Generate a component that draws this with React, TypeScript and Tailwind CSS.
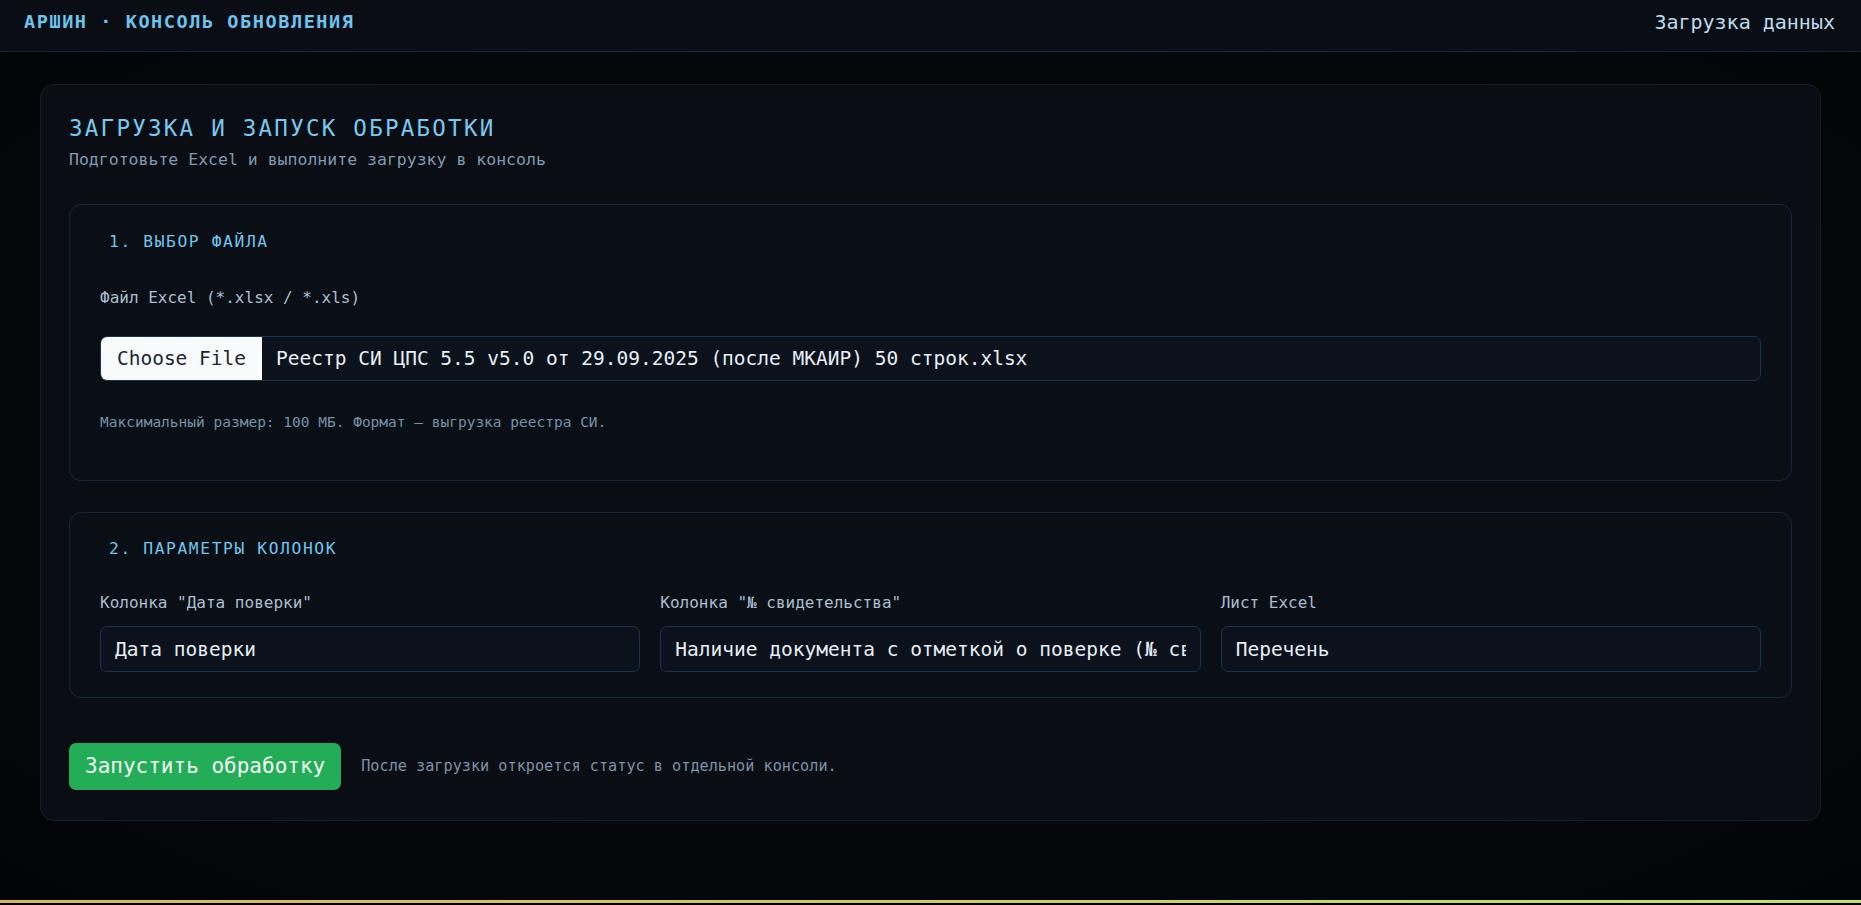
import React from "react";

const sectionBox =
  "rounded-[12px] border border-[#15293b] bg-[#0a0e15] px-[30px]";

function SectionHeading({ children }: { children: React.ReactNode }) {
  return (
    <h2 className="ml-[9px] text-[16.25px] leading-[22px] tracking-[0.1em] uppercase text-[#72c5ee]">
      {children}
    </h2>
  );
}

function Field({ label, value }: { label: string; value: string }) {
  return (
    <label className="flex flex-col gap-[12px] min-w-0">
      <span className="text-[16px] leading-[22px] text-[#a9bfd1]">{label}</span>
      <input
        readOnly
        value={value}
        className="h-[46px] w-full rounded-[7px] border border-[#183450] bg-[#0b121c] px-[14px] text-[19.5px] text-[#e8eef5] outline-none font-['DejaVu_Sans_Mono',monospace]"
      />
    </label>
  );
}

export default function App() {
  return (
    <div className="min-h-screen flex flex-col bg-[radial-gradient(ellipse_at_center,#070a10_0%,#05070b_70%,#030406_100%)] font-['DejaVu_Sans_Mono',monospace]">
      {/* верхняя панель */}
      <header className="h-[52px] shrink-0 flex items-start justify-between pt-[10px] pl-6 pr-[26px] bg-[#0a0e14] border-b border-[#112a3c]">
        <div className="text-[18.5px] leading-[24px] font-semibold tracking-[0.085em] text-[#6ec4ee]">
          АРШИН · КОНСОЛЬ ОБНОВЛЕНИЯ
        </div>
        <nav className="text-[20px] leading-[24px] text-[#bcdcee]">Загрузка данных</nav>
      </header>

      <main className="flex-1 px-10 pt-8">
        <section className="rounded-[14px] border border-[#131f2b] bg-[#0a0d13] py-[30px] px-[28px] flex flex-col">
          <h1 className="text-[22.5px] leading-[26px] tracking-[0.1em] uppercase text-[#78c9f0]">
            Загрузка и запуск обработки
          </h1>
          <p className="mt-[8px] text-[16.5px] leading-[22px] text-[#7f9bb1]">
            Подготовьте Excel и выполните загрузку в консоль
          </p>

          {/* шаг 1 */}
          <div className={`mt-[33px] pt-[26px] pb-[48px] ${sectionBox}`}>
            <SectionHeading>1. Выбор файла</SectionHeading>
            <div className="mt-[34px] text-[16px] leading-[22px] text-[#a9bfd1]">
              Файл Excel (*.xlsx / *.xls)
            </div>
            <div className="mt-[27px] h-[45px] flex items-stretch overflow-hidden rounded-[7px] border border-[#183450] bg-[#0b121c]">
              <div className="w-[161px] shrink-0 flex items-center justify-center bg-[#f8fafc] text-[19.5px] text-[#1e2530]">
                Choose File
              </div>
              <div className="flex items-center pl-[14px] text-[19.5px] text-[#e8eef5] whitespace-nowrap">
                Реестр СИ ЦПС 5.5 v5.0 от 29.09.2025 (после МКАИР) 50 строк.xlsx
              </div>
            </div>
            <div className="mt-[31px] text-[14.5px] leading-[20px] text-[#7592a9]">
              Максимальный размер: 100 МБ. Формат — выгрузка реестра СИ.
            </div>
          </div>

          {/* шаг 2 */}
          <div className={`mt-[31px] pt-[25px] pb-[25px] ${sectionBox}`}>
            <SectionHeading>2. Параметры колонок</SectionHeading>
            <div className="mt-[32px] grid grid-cols-3 gap-[20px]">
              <Field label={'Колонка "Дата поверки"'} value="Дата поверки" />
              <Field
                label={'Колонка "№ свидетельства"'}
                value="Наличие документа с отметкой о поверке (№ свидетельства)"
              />
              <Field label="Лист Excel" value="Перечень" />
            </div>
          </div>

          <div className="mt-[45px] flex items-center gap-[20px]">
            <button className="h-[47px] rounded-[7px] bg-[#22ad56] px-[16px] text-[21px] text-[#f2fbf5]">
              Запустить обработку
            </button>
            <span className="text-[15.2px] text-[#7b93a8]">
              После загрузки откроется статус в отдельной консоли.
            </span>
          </div>
        </section>
      </main>

      <footer className="h-[5px] shrink-0 flex flex-col">
        <div className="h-[3px] bg-gradient-to-r from-[#ddb45c] via-[#d0cb5f] to-[#c3e264]" />
        <div className="h-[2px] bg-black" />
      </footer>
    </div>
  );
}
